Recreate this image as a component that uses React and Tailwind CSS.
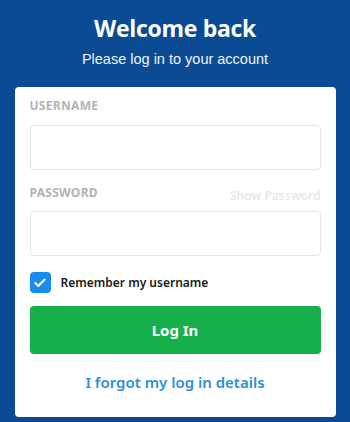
import { Check } from 'lucide-react';

export default function App() {
  return (
    <div className="w-[350px] h-[422px] bg-[#0a4b93] flex flex-col items-center overflow-hidden" style={{ fontFamily: '"Noto Sans", sans-serif' }}>
      {/* Header */}
      <h1 className="mt-[12px] text-[23px] leading-[32px] font-bold text-white tracking-[-0.3px]" style={{ fontFamily: '"Open Sans", sans-serif' }}>
        Welcome back
      </h1>
      <p className="mt-[6px] text-[14.5px] leading-[18px] text-[#eef3fa]" style={{ fontFamily: '"Liberation Sans", Arial, sans-serif' }}>
        Please log in to your account
      </p>

      {/* Card */}
      <div className="mt-[19px] w-[321px] h-[330px] bg-white rounded-[4px] px-[15px] pt-[10px] flex flex-col">
        <label className="text-[12px] leading-[18px] font-bold tracking-[0.3px] text-[#b3b3b3]">USERNAME</label>
        <input className="mt-[10px] h-[45px] w-full border border-[#e4e4e4] rounded-[4px] outline-none" />

        <div className="mt-[14px] flex items-end justify-between">
          <label className="text-[12px] leading-[18px] font-bold tracking-[0.3px] text-[#b3b3b3]">PASSWORD</label>
          <span className="text-[12px] leading-[16px] font-semibold text-[#e8e8e8] -mb-[2px]">Show Password</span>
        </div>
        <input type="password" className="mt-[9px] h-[45px] w-full border border-[#e4e4e4] rounded-[4px] outline-none" />

        <div className="mt-[16px] flex items-center gap-[10px]">
          <span className="w-[21px] h-[21px] rounded-[4px] bg-[#1a8cf0] flex items-center justify-center">
            <Check size={14} strokeWidth={3.5} className="text-white" />
          </span>
          <span className="text-[12px] leading-[18px] font-semibold text-[#1a1a1a]">Remember my username</span>
        </div>

        <button className="mt-[13px] h-[48px] w-full rounded-[4px] bg-[#15b04c] text-white text-[15px] font-bold">
          Log In
        </button>

        <a className="mt-[18px] text-center text-[15px] leading-[20px] font-semibold text-[#2c8fd8]">
          I forgot my log in details
        </a>
      </div>
    </div>
  );
}
